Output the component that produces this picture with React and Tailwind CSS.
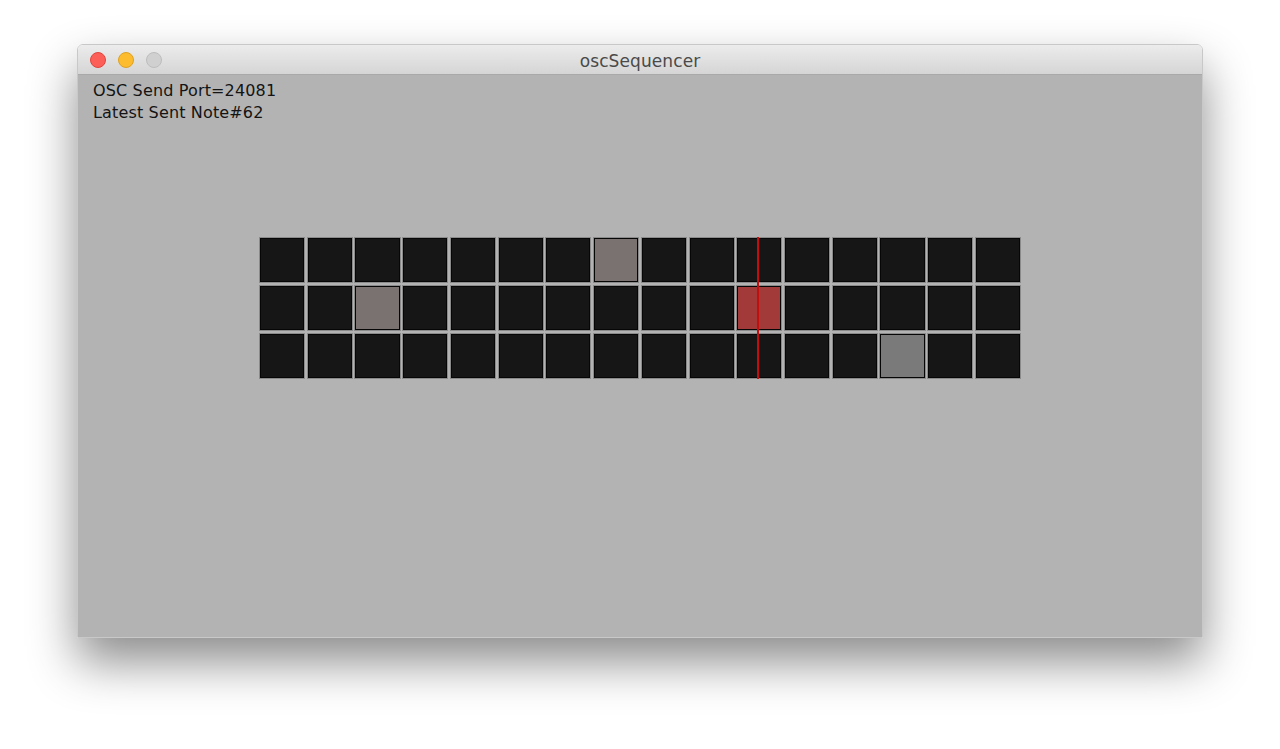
const ROWS = 3;
const COLS = 16;

// cells that are switched on: [row, col, colour]
const active = {
  "0-7": "bg-[#7a7270]",
  "1-2": "bg-[#7a7270]",
  "1-10": "bg-[#a23a3a]",
  "2-13": "bg-[#7a7a7a]",
};

function TrafficLights() {
  return (
    <div className="flex items-center gap-[12px] pl-[12px] pt-[1px] absolute left-0 top-0 h-full">
      <span className="w-[16px] h-[16px] rounded-full bg-[#fc5f57] border border-[#e0443e]" />
      <span className="w-[16px] h-[16px] rounded-full bg-[#fdbc2e] border border-[#dea123]" />
      <span className="w-[16px] h-[16px] rounded-full bg-[#d0d0d0] border border-[#bdbdbd]" />
    </div>
  );
}

function Grid() {
  const cells = [];
  for (let r = 0; r < ROWS; r++) {
    for (let c = 0; c < COLS; c++) {
      const fill = active[`${r}-${c}`] || "bg-[#161616]";
      cells.push(
        <div key={`${r}-${c}`} className="border border-[#8a8a8a] bg-[#a6a6a6]">
          <div className={`h-full w-full border border-[#060606] ${fill}`} />
        </div>
      );
    }
  }
  return (
    <div className="relative mx-auto w-[762px] mt-[113px]">
      <div className="grid grid-cols-16 grid-rows-3 gap-[1.6px] h-[142px]">{cells}</div>
      <div className="absolute top-0 bottom-0 left-[498px] w-[2px] bg-[#c40d0d]" />
    </div>
  );
}

export default function App() {
  return (
    <div className="min-h-screen bg-white pt-[44px] pl-[77px]">
      <div className="w-[1126px] rounded-t-[6px] overflow-hidden border border-[#c8c8c8] shadow-[0_24px_48px_rgba(0,0,0,0.45)]">
        <div className="relative h-[30px] pt-[4px] bg-gradient-to-b from-[#ececec] to-[#d5d5d5] border-b border-[#a9a9a9] flex items-center justify-center">
          <TrafficLights />
          <span className="text-[17px] text-[#4a4a4a] font-['DejaVu_Sans',sans-serif] tracking-[0.1px]">
            oscSequencer
          </span>
        </div>
        <div className="h-[562px] bg-[#b3b3b3] pt-[5px] pl-[15px] pr-[15px]">
          <div className="font-['DejaVu_Sans',sans-serif] text-[16px] leading-[22px] tracking-[0.15px] text-[#141414]">
            <div>OSC Send Port=24081</div>
            <div>Latest Sent Note#62</div>
          </div>
          <Grid />
        </div>
      </div>
    </div>
  );
}
